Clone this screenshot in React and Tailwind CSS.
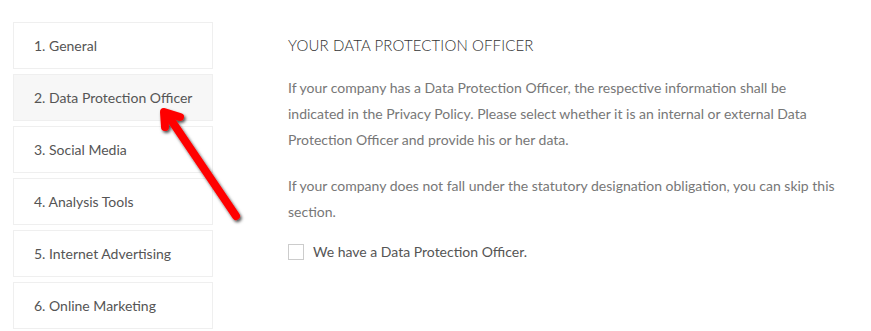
import React from "react";

const steps = [
  "1. General",
  "2. Data Protection Officer",
  "3. Social Media",
  "4. Analysis Tools",
  "5. Internet Advertising",
  "6. Online Marketing",
];

export default function App() {
  return (
    <div
      className="relative flex w-[871px] h-[331px] bg-white pt-[22px] pl-[13px] overflow-hidden"
      style={{ fontFamily: "Lato, 'Open Sans', sans-serif" }}
    >
      {/* steps sidebar */}
      <div className="flex flex-col gap-[5px] w-[200px]">
        {steps.map((s, i) => (
          <div
            key={s}
            className={`h-[47px] flex items-center pl-[20px] border border-[#efefef] text-[14px] text-[#555] ${
              i === 1 ? "bg-[#f7f7f7]" : "bg-white"
            }`}
          >
            {s}
          </div>
        ))}
      </div>

      {/* content */}
      <div className="ml-[75px] w-[550px]">
        <h2 className="mt-[12px] text-[15px] leading-[22px] font-light text-[#333] tracking-[0.12px]">
          YOUR DATA PROTECTION OFFICER
        </h2>
        <p className="mt-[19px] text-[14px] leading-[26px] text-[#777]">
          If your company has a Data Protection Officer, the respective
          information shall be indicated in the Privacy Policy. Please select
          whether it is an internal or external Data Protection Officer and
          provide his or her data.
        </p>
        <p className="mt-[20px] text-[14px] leading-[26px] text-[#777]">
          If your company does not fall under the statutory designation
          obligation, you can skip this section.
        </p>
        <label className="mt-[16px] flex items-center gap-[9px] text-[14px] text-[#555]">
          <span className="w-[16px] h-[16px] border border-[#ccc] bg-white" />
          We have a Data Protection Officer.
        </label>
      </div>

      {/* red annotation arrow */}
      <svg
        className="absolute left-0 top-0 pointer-events-none"
        width="871"
        height="331"
      >
        <defs>
          <filter id="sh" x="-20%" y="-20%" width="140%" height="140%">
            <feDropShadow dx="1.5" dy="2" stdDeviation="1.5" floodColor="#000" floodOpacity="0.7" />
          </filter>
        </defs>
        <g
          filter="url(#sh)"
          stroke="#ff0000"
          strokeWidth="8"
          strokeLinecap="round"
          strokeLinejoin="round"
          fill="none"
        >
          <path d="M236 216 L167 114" />
          <path d="M165 127 L164 112 L180 117" />
        </g>
      </svg>
    </div>
  );
}
